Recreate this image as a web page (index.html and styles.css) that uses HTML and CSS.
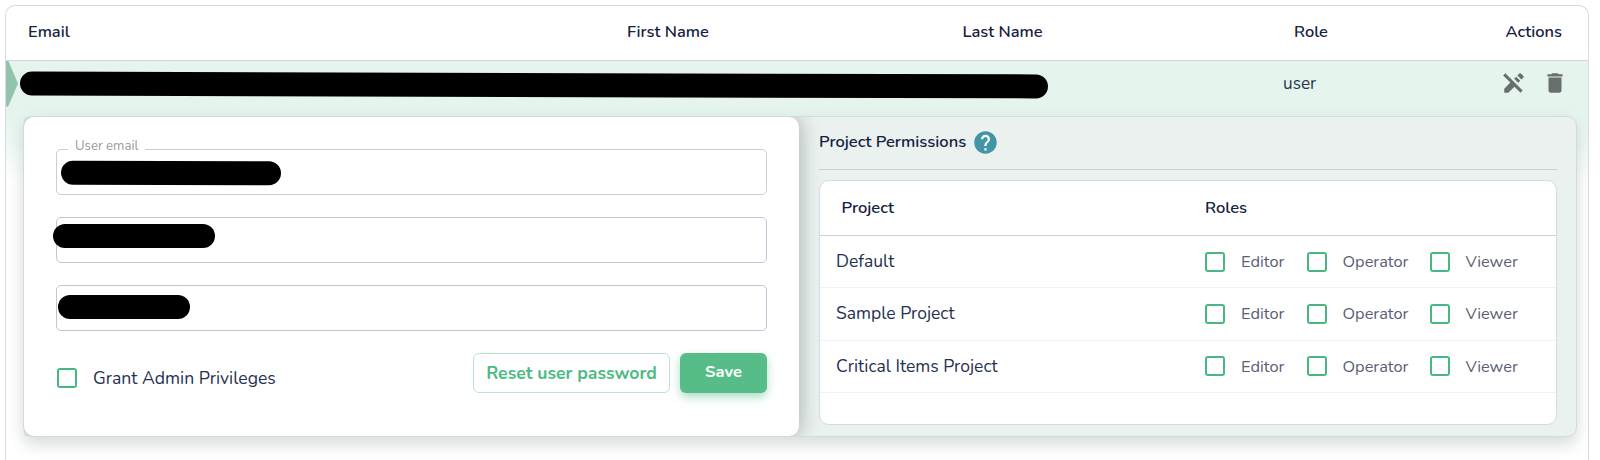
FILE: index.html
```html
<!DOCTYPE html>
<html lang="en">
<head>
    <meta charset="UTF-8">
    <meta name="viewport" content="width=device-width, initial-scale=1.0">
    <title>Users</title>
    <link rel="stylesheet" href="styles.css">
</head>
<body>

    <div class="users">
        <!-- Table header -->
        <div class="users-head">
            <span>Email</span>
            <span>First Name</span>
            <span>Last Name</span>
            <span>Role</span>
            <span>Actions</span>
        </div>

        <!-- Selected user -->
        <div class="user-row">
            <div class="row-arrow"></div>
            <div class="redacted redacted-row"></div>
            <span class="user-role">user</span>
            <div class="actions">
                <svg width="26" height="26" viewBox="0 0 24 24">
                    <path d="M12.126 8.125l1.937-1.937 3.747 3.747-1.937 1.938zM20.710 5.630l-2.340-2.340a1 1 0 0 0-1.410 0l-1.830 1.830 3.750 3.750L20.710 7a1 1 0 0 0 0-1.370zM2 5l6.630 6.630L3 17.250V21h3.750l5.630-5.620L18 21l2-2L4 3 2 5z"/>
                </svg>
                <svg width="26" height="26" viewBox="0 0 24 24">
                    <path d="M6 19c0 1.100.9 2 2 2h8c1.100 0 2-.9 2-2V7H6v12zM19 4h-3.500l-1-1h-5l-1 1H5v2h14V4z"/>
                </svg>
            </div>
        </div>

        <!-- Expanded details -->
        <div class="details">
            <div class="card">
                <form class="user-form">
                    <div class="field field-disabled">
                        <span class="field-label">User email</span>
                        <div class="redacted redacted-email"></div>
                    </div>
                    <div class="field">
                        <div class="redacted redacted-first"></div>
                    </div>
                    <div class="field">
                        <div class="redacted redacted-last"></div>
                    </div>
                    <div class="form-footer">
                        <label class="admin"><i class="checkbox"></i><span>Grant Admin Privileges</span></label>
                        <button type="button" class="btn-reset">Reset user password</button>
                        <button type="button" class="btn-save">Save</button>
                    </div>
                </form>

                <div class="permissions">
                    <div class="permissions-title">
                        <span>Project Permissions</span>
                        <svg width="27" height="27" viewBox="0 0 24 24">
                            <circle class="help-mark" cx="12" cy="12" r="9"/>
                            <path d="M12 2C6.480 2 2 6.480 2 12s4.480 10 10 10 10-4.480 10-10S17.520 2 12 2zm1 17h-2v-2h2v2zm2.070-7.750l-.9.920C13.450 12.900 13 13.500 13 15h-2v-.5c0-1.100.450-2.100 1.170-2.830l1.240-1.260c.370-.360.590-.860.590-1.410 0-1.100-.9-2-2-2s-2 .9-2 2H8c0-2.210 1.790-4 4-4s4 1.790 4 4c0 .880-.360 1.680-.930 2.250z"/>
                        </svg>
                    </div>
                    <div class="projects">
                        <div class="projects-head">
                            <span>Project</span>
                            <span>Roles</span>
                        </div>
                        <div class="project">
                            <span class="project-name">Default</span>
                            <label class="role editor"><i class="checkbox"></i><span>Editor</span></label>
                            <label class="role operator"><i class="checkbox"></i><span>Operator</span></label>
                            <label class="role"><i class="checkbox"></i><span>Viewer</span></label>
                        </div>
                        <div class="project">
                            <span class="project-name">Sample Project</span>
                            <label class="role editor"><i class="checkbox"></i><span>Editor</span></label>
                            <label class="role operator"><i class="checkbox"></i><span>Operator</span></label>
                            <label class="role"><i class="checkbox"></i><span>Viewer</span></label>
                        </div>
                        <div class="project">
                            <span class="project-name">Critical Items Project</span>
                            <label class="role editor"><i class="checkbox"></i><span>Editor</span></label>
                            <label class="role operator"><i class="checkbox"></i><span>Operator</span></label>
                            <label class="role"><i class="checkbox"></i><span>Viewer</span></label>
                        </div>
                    </div>
                </div>
            </div>
        </div>
    </div>

</body>
</html>
```
FILE: styles.css
```css
* {
    margin: 0;
    padding: 0;
    box-sizing: border-box;
}

body {
    font-family: Nunito, Lato, sans-serif;
    font-size: 17px;
    color: #14213f;
    background-color: #fff;
    height: 460px;
    padding: 5px 11px 0 5px;
    overflow: hidden;
}

.users {
    height: 455px;
    border: 1px solid #d5d8e8;
    border-bottom: none;
    border-radius: 10px 10px 0 0;
    overflow: hidden;
}

/* Table header */
.users-head {
    display: grid;
    grid-template-columns: 599px 335.500px 331.500px 211.500px 1fr;
    align-items: center;
    height: 55px;
    padding: 0 0 3px 22px;
    border-bottom: 1px solid #cdd5e6;
    font-size: 16.400px;
    font-weight: 600;
}

/* Selected user */
.user-row {
    display: flex;
    align-items: center;
    height: 46px;
    background-color: #e5f4ed;
    border-bottom: 1px solid #e7f1ed;
}

.row-arrow {
    width: 12px;
    height: 46px;
    background-color: #92c4ab;
    clip-path: polygon(0 0, 18% 0, 100% 50%, 18% 100%, 0 100%);
}

.redacted {
    height: 23.500px;
    border-radius: 12px;
    background-color: #000;
}

.redacted-row {
    width: 1027.500px;
    margin: 1.500px 0 0 1.500px;
    transform: rotate(0.160deg);
}

.user-role {
    width: 217.500px;
    margin-left: 236px;
    padding-bottom: 1px;
    color: #2b3651;
    font-size: 17.200px;
}

.actions {
    display: flex;
    align-items: center;
    gap: 15px;
    padding-bottom: 1px;
    fill: #696f6c;
}

/* Expanded details */
.details {
    padding: 9px 11px 0 17px;
    background: linear-gradient(#e5f4ed 0, #e9f6f0 20px, #fff 75px);
}

.card {
    display: flex;
    height: 321px;
    border: 1px solid #d3d9e6;
    border-radius: 10px;
    background-color: #eaf1ef;
    box-shadow: 0 7px 16px rgba(60, 90, 75, 0.22);
}

.user-form {
    width: 775px;
    padding: 32px 31px 0 32px;
    border-radius: 10px;
    background-color: #fff;
    box-shadow: 3px 0 18px rgba(50, 60, 60, 0.3);
    clip-path: inset(0 -30px 0 0);
}

.field {
    position: relative;
    display: flex;
    width: 711px;
    height: 46px;
    margin-bottom: 22px;
    border: 1px solid #c2c5d8;
    border-radius: 5px;
}

.field-disabled {
    border-color: #cecece;
}

.field-label {
    position: absolute;
    top: -13px;
    left: 11px;
    padding: 0 7px;
    background-color: #fff;
    color: #9b9b9b;
    font-size: 13.200px;
    line-height: 18px;
}

.redacted-email {
    width: 219.500px;
    margin: 11px 0 0 3.500px;
    transform: rotate(0.160deg);
}

.redacted-first {
    width: 161.500px;
    margin: 6px 0 0 -4px;
}

.redacted-last {
    width: 131.500px;
    margin: 9px 0 0 1px;
}

.form-footer {
    display: flex;
    align-items: center;
    width: 711px;
    height: 40px;
}

.checkbox {
    flex: none;
    width: 20px;
    height: 20px;
    border: 2px solid #49b880;
    border-radius: 3px;
}

.admin {
    display: flex;
    align-items: center;
    gap: 16px;
    padding: 9px 0 0 1px;
    margin-right: auto;
    color: #263150;
    font-size: 17.600px;
}

.btn-reset,
.btn-save {
    height: 40px;
    border-radius: 6px;
    font-family: inherit;
    font-weight: 700;
}

.btn-reset {
    width: 197px;
    margin-right: 10px;
    border: 1px solid #b9e4cd;
    background-color: #fff;
    color: #4dbb83;
    font-size: 17.600px;
}

.btn-save {
    width: 87px;
    padding-bottom: 3px;
    border: none;
    background-color: #56bd89;
    color: #fff;
    font-size: 16.500px;
    box-shadow: 0 4px 8px rgba(86, 189, 137, 0.5);
}

/* Project permissions */
.permissions {
    flex: 1;
    padding: 12px 19px 0 20px;
}

.permissions-title {
    display: flex;
    align-items: center;
    gap: 6px;
    height: 41px;
    margin-bottom: 10px;
    padding-bottom: 13px;
    border-bottom: 1px solid #c8d1d0;
    font-size: 16.500px;
    font-weight: 600;
}

.permissions-title span {
    padding-bottom: 2px;
}

.permissions-title svg {
    fill: #4295a5;
}

.permissions-title .help-mark {
    fill: #fff;
}

.projects {
    width: 738px;
    height: 245px;
    border: 1px solid #d3d9e8;
    border-radius: 10px;
    background-color: #fff;
}

.projects-head {
    display: grid;
    grid-template-columns: 363.500px 1fr;
    align-items: center;
    height: 55px;
    padding: 0 0 2px 21.500px;
    border-bottom: 1px solid #cdd0e3;
    font-size: 16.500px;
    font-weight: 600;
}

.project {
    display: flex;
    align-items: center;
    height: 52.330px;
    padding-left: 16px;
    border-bottom: 1px solid #f2f3f8;
}

.project-name {
    width: 369px;
    padding-bottom: 1px;
    color: #263150;
    font-size: 17.500px;
}

.role {
    display: flex;
    align-items: center;
    gap: 16px;
    color: #5a6074;
    font-size: 16.400px;
}

.editor {
    width: 101.500px;
}

.operator {
    width: 123px;
}
```
